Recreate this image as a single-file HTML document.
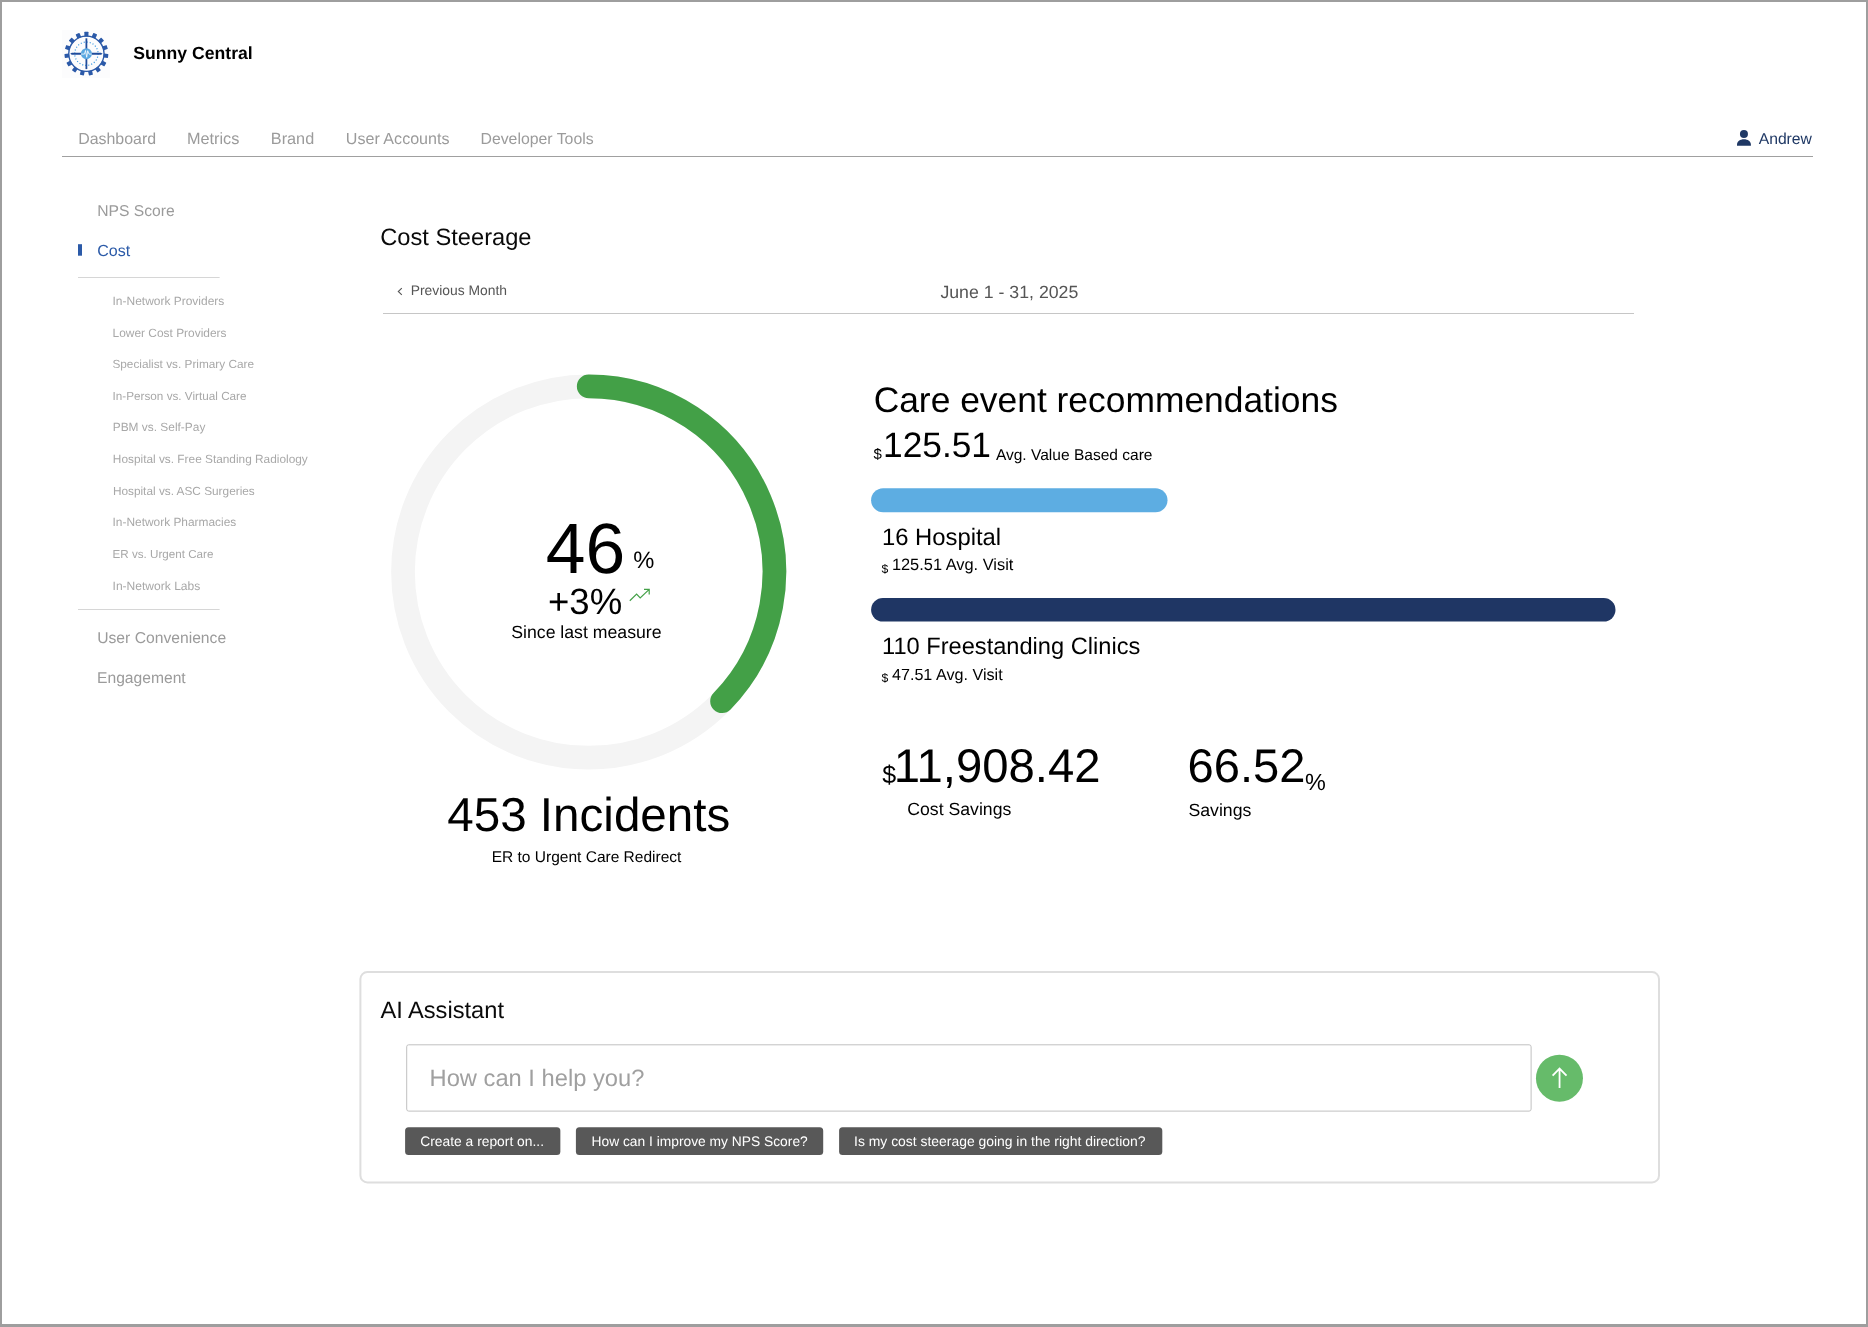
<!DOCTYPE html>
<html>
<head>
<meta charset="utf-8">
<title>Sunny Central</title>
<style>
*{margin:0;padding:0;box-sizing:border-box;}
html,body{width:1868px;height:1327px;overflow:hidden;background:#fff;}
body{font-family:"Liberation Sans",sans-serif;color:#000;position:relative;}
.t{position:absolute;white-space:nowrap;line-height:1;}
#txt{position:absolute;left:0;top:0;width:1868px;height:1327px;will-change:transform;text-rendering:geometricPrecision;}
#shapes{position:absolute;left:0;top:0;}
</style>
</head>
<body>
<svg id="shapes" width="1868" height="1327" viewBox="0 0 1868 1327">
<!-- frame -->
<rect x="0" y="0" width="1868" height="2" fill="#9e9e9e"/>
<rect x="0" y="0" width="2" height="1327" fill="#9e9e9e"/>
<rect x="1866" y="0" width="2" height="1327" fill="#9e9e9e"/>
<rect x="0" y="1324" width="1868" height="3" fill="#9e9e9e"/>
<!-- logo -->
<g transform="translate(62 30)">
<rect x="0" y="0" width="48" height="48" fill="#fcfcfd"/>
<g transform="translate(24.4 23.7)">
<rect x="-2.05" y="-21.9" width="4.1" height="4.6" rx="0.5" fill="#2b59a8" transform="rotate(0)"/>
<rect x="-2.05" y="-21.9" width="4.1" height="4.6" rx="0.5" fill="#2b59a8" transform="rotate(24)"/>
<rect x="-2.05" y="-21.9" width="4.1" height="4.6" rx="0.5" fill="#2b59a8" transform="rotate(48)"/>
<rect x="-2.05" y="-21.9" width="4.1" height="4.6" rx="0.5" fill="#2b59a8" transform="rotate(72)"/>
<rect x="-2.05" y="-21.9" width="4.1" height="4.6" rx="0.5" fill="#2b59a8" transform="rotate(96)"/>
<rect x="-2.05" y="-21.9" width="4.1" height="4.6" rx="0.5" fill="#2b59a8" transform="rotate(120)"/>
<rect x="-2.05" y="-21.9" width="4.1" height="4.6" rx="0.5" fill="#2b59a8" transform="rotate(144)"/>
<rect x="-2.05" y="-21.9" width="4.1" height="4.6" rx="0.5" fill="#2b59a8" transform="rotate(168)"/>
<rect x="-2.05" y="-21.9" width="4.1" height="4.6" rx="0.5" fill="#2b59a8" transform="rotate(192)"/>
<rect x="-2.05" y="-21.9" width="4.1" height="4.6" rx="0.5" fill="#2b59a8" transform="rotate(216)"/>
<rect x="-2.05" y="-21.9" width="4.1" height="4.6" rx="0.5" fill="#2b59a8" transform="rotate(240)"/>
<rect x="-2.05" y="-21.9" width="4.1" height="4.6" rx="0.5" fill="#2b59a8" transform="rotate(264)"/>
<rect x="-2.05" y="-21.9" width="4.1" height="4.6" rx="0.5" fill="#2b59a8" transform="rotate(288)"/>
<rect x="-2.05" y="-21.9" width="4.1" height="4.6" rx="0.5" fill="#2b59a8" transform="rotate(312)"/>
<rect x="-2.05" y="-21.9" width="4.1" height="4.6" rx="0.5" fill="#2b59a8" transform="rotate(336)"/>
<circle r="17.65" fill="none" stroke="#2b59a8" stroke-width="1.35"/>
<circle r="11.7" fill="none" stroke="#3d9be2" stroke-width="1.2" stroke-dasharray="1.1 1.96" />
<path d="M0 -15.4V15.4" stroke="#1f4c9c" stroke-width="1.8"/>
<path d="M-16.2 0.1L-14.6 -0.9H14.6L16.2 0.1L14.6 1H-14.6Z" fill="#1f4c9c"/>
<circle r="5.5" fill="#5ba8e1"/>
<path d="M-5.3 0.4H-1.9L-0.9 -3.2L0.3 3.6L1.3 -3L2.6 0.4H5.3" fill="none" stroke="#fff" stroke-width="0.8" stroke-linejoin="round"/>
</g>
</g>
<!-- user icon -->
<circle cx="1743.95" cy="133.9" r="4" fill="#1f3864"/>
<path d="M1737 145.7 V144.6 C1737 141.4 1740 139.2 1743.95 139.2 C1747.9 139.2 1750.9 141.4 1750.9 144.6 V145.7 Z" fill="#1f3864"/>
<!-- nav line -->
<rect x="62" y="156" width="1751" height="1" fill="#a0a0a0"/>
<!-- sidebar -->
<rect x="78" y="244.2" width="4" height="11.5" fill="#2b5aa8"/>
<rect x="78" y="277" width="141.6" height="1" fill="#d6d6d6"/>
<rect x="78" y="609" width="141.6" height="1" fill="#d6d6d6"/>
<!-- header line + chevron -->
<path d="M401.8 288.2L398.3 291.5L401.8 294.8" fill="none" stroke="#555" stroke-width="1.1"/>
<rect x="383" y="313" width="1251" height="1" fill="#c6c6c6"/>
<!-- donut -->
<circle cx="588.7" cy="572" r="185.7" fill="none" stroke="#f4f4f4" stroke-width="23.7"/>
<path d="M588.7 386.3 A185.7 185.7 0 0 1 722.05 701.2" fill="none" stroke="#43a047" stroke-width="23.7" stroke-linecap="round"/>
<!-- trend icon -->
<path d="M629.8 600.7L636.6 594.1L640.2 597.9L649.2 589.4M644 589.4H649.2V594.4" fill="none" stroke="#43a047" stroke-width="1.2"/>
<!-- bars -->
<rect x="871.1" y="488.2" width="296.4" height="24" rx="12" fill="#5dade2"/>
<rect x="871.1" y="598" width="744.4" height="23.6" rx="11.8" fill="#1f3664"/>
<!-- AI box -->
<rect x="360.4" y="972.1" width="1298.6" height="210.3" rx="7" fill="none" stroke="#dedede" stroke-width="2"/>
<rect x="406.7" y="1044.8" width="1124.4" height="66.3" rx="2" fill="none" stroke="#c0c0c0" stroke-width="1"/>
<circle cx="1559.45" cy="1078.2" r="23.5" fill="#66bb6a"/>
<path d="M1559.55 1087.9V1068.6M1552.6 1075.6L1559.55 1068.5L1566.5 1075.6" fill="none" stroke="#fff" stroke-width="1.8"/>
<rect x="405.1" y="1127.3" width="155.25" height="27.7" rx="3.5" fill="#585858"/>
<rect x="575.9" y="1127.3" width="247.3" height="27.7" rx="3.5" fill="#585858"/>
<rect x="839.1" y="1127.3" width="323.2" height="27.7" rx="3.5" fill="#585858"/>
</svg>
<div id="txt">
<div class="t" id="brand" style="left:133.37px;top:45px;font-size:17.62px;color:#000;font-weight:bold;">Sunny Central</div>
<div class="t" id="n1" style="left:78.15px;top:132px;font-size:15.95px;color:#9b9b9b;">Dashboard</div>
<div class="t" id="n2" style="left:186.93px;top:131px;font-size:16.26px;color:#9b9b9b;">Metrics</div>
<div class="t" id="n3" style="left:270.83px;top:131px;font-size:16.26px;color:#9b9b9b;">Brand</div>
<div class="t" id="n4" style="left:345.85px;top:131px;font-size:16.08px;color:#9b9b9b;">User Accounts</div>
<div class="t" id="n5" style="left:480.46px;top:132px;font-size:15.84px;color:#9b9b9b;">Developer Tools</div>
<div class="t" id="andrew" style="left:1758.66px;top:132px;font-size:15.72px;color:#1f3864;">Andrew</div>
<div class="t" id="s1" style="left:97.18px;top:204px;font-size:15.68px;color:#9b9b9b;">NPS Score</div>
<div class="t" id="s2" style="left:97.15px;top:243px;font-size:16.05px;color:#2b5aa8;">Cost</div>
<div class="t" id="s3" style="left:97.20px;top:631px;font-size:15.68px;color:#9b9b9b;">User Convenience</div>
<div class="t" id="s4" style="left:97.00px;top:671px;font-size:15.65px;color:#9b9b9b;">Engagement</div>
<div class="t" id="title" style="left:380.29px;top:227px;font-size:23.66px;color:#0a0a0a;">Cost Steerage</div>
<div class="t" id="prev" style="left:410.67px;top:284px;font-size:13.86px;color:#555;">Previous Month</div>
<div class="t" id="date" style="left:940.42px;top:284px;font-size:17.73px;color:#555;">June 1 - 31, 2025</div>
<div class="t" id="big46" style="left:545.78px;top:514px;font-size:71.4px;color:#000;">46</div>
<div class="t" id="pct1" style="left:633.16px;top:550px;font-size:23.73px;color:#000;">%</div>
<div class="t" id="plus3" style="left:547.99px;top:584px;font-size:36.57px;color:#000;">+3%</div>
<div class="t" id="since" style="left:511.25px;top:624px;font-size:17.68px;color:#000;">Since last measure</div>
<div class="t" id="inc" style="left:447.26px;top:792px;font-size:47.59px;color:#000;">453 Incidents</div>
<div class="t" id="er" style="left:491.69px;top:850px;font-size:15.52px;color:#000;">ER to Urgent Care Redirect</div>
<div class="t" id="care" style="left:873.64px;top:383px;font-size:35.4px;color:#000;">Care event recommendations</div>
<div class="t" id="d1" style="left:873.39px;top:447px;font-size:15.0px;color:#000;">$</div>
<div class="t" id="v1" style="left:883.00px;top:428px;font-size:35.3px;color:#000;">125.51</div>
<div class="t" id="avb" style="left:995.90px;top:448px;font-size:15.54px;color:#000;">Avg. Value Based care</div>
<div class="t" id="h16" style="left:882.01px;top:526px;font-size:23.82px;color:#000;">16 Hospital</div>
<div class="t" id="d2" style="left:881.50px;top:563px;font-size:12.2px;color:#000;">$</div>
<div class="t" id="v2" style="left:891.88px;top:557px;font-size:16.4px;color:#000;">125.51 Avg. Visit</div>
<div class="t" id="f110" style="left:882.02px;top:636px;font-size:23.63px;color:#000;">110 Freestanding Clinics</div>
<div class="t" id="d3" style="left:881.50px;top:672px;font-size:12.2px;color:#000;">$</div>
<div class="t" id="v3" style="left:891.95px;top:667px;font-size:16.15px;color:#000;">47.51 Avg. Visit</div>
<div class="t" id="d4" style="left:882.20px;top:763px;font-size:25px;color:#000;">$</div>
<div class="t" id="v4" style="left:893.75px;top:743px;font-size:47.27px;color:#000;">11,908.42</div>
<div class="t" id="cs" style="left:907.27px;top:801px;font-size:17.67px;color:#000;">Cost Savings</div>
<div class="t" id="v5" style="left:1187.54px;top:742px;font-size:47.1px;color:#000;">66.52</div>
<div class="t" id="pct2" style="left:1304.97px;top:771px;font-size:23.43px;color:#000;">%</div>
<div class="t" id="sav" style="left:1188.45px;top:802px;font-size:17.7px;color:#000;">Savings</div>
<div class="t" id="ai" style="left:380.40px;top:1000px;font-size:23.66px;color:#0a0a0a;">AI Assistant</div>
<div class="t" id="ph" style="left:429.55px;top:1068px;font-size:23.71px;color:#a0a0a0;">How can I help you?</div>
<div class="t" id="c1" style="left:420.25px;top:1135px;font-size:13.84px;color:#fff;">Create a report on...</div>
<div class="t" id="c2" style="left:591.50px;top:1135px;font-size:13.8px;color:#fff;">How can I improve my NPS Score?</div>
<div class="t" id="c3" style="left:854.06px;top:1135px;font-size:13.91px;color:#fff;">Is my cost steerage going in the right direction?</div>
<div class="t" id="sub0" style="left:112.56px;top:295px;font-size:11.98px;color:#a8a8a8;">In-Network Providers</div>
<div class="t" id="sub1" style="left:112.57px;top:328px;font-size:11.93px;color:#a8a8a8;">Lower Cost Providers</div>
<div class="t" id="sub2" style="left:112.42px;top:359px;font-size:11.81px;color:#a8a8a8;">Specialist vs. Primary Care</div>
<div class="t" id="sub3" style="left:112.58px;top:391px;font-size:11.72px;color:#a8a8a8;">In-Person vs. Virtual Care</div>
<div class="t" id="sub4" style="left:112.72px;top:422px;font-size:11.92px;color:#a8a8a8;">PBM vs. Self-Pay</div>
<div class="t" id="sub5" style="left:112.86px;top:454px;font-size:11.85px;color:#a8a8a8;">Hospital vs. Free Standing Radiology</div>
<div class="t" id="sub6" style="left:112.93px;top:486px;font-size:11.82px;color:#a8a8a8;">Hospital vs. ASC Surgeries</div>
<div class="t" id="sub7" style="left:112.57px;top:517px;font-size:11.92px;color:#a8a8a8;">In-Network Pharmacies</div>
<div class="t" id="sub8" style="left:112.59px;top:549px;font-size:11.64px;color:#a8a8a8;">ER vs. Urgent Care</div>
<div class="t" id="sub9" style="left:112.56px;top:580px;font-size:12.06px;color:#a8a8a8;">In-Network Labs</div>
</div>
</body>
</html>
